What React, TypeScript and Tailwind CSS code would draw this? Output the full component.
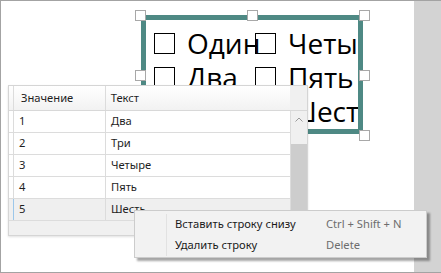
import { ReactNode } from "react";

const rows = [
  { value: "1", text: "Два" },
  { value: "2", text: "Три" },
  { value: "3", text: "Четыре" },
  { value: "4", text: "Пять" },
  { value: "5", text: "Шесть" },
];

const options = ["Один", "Два", "Три", "Четыре", "Пять", "Шесть"];

function Handle({ className }: { className: string }) {
  return <div className={`absolute w-[11px] h-[11px] bg-white border border-[#a8a8a8] ${className}`} />;
}

function CheckItem({ label }: { label: string }) {
  return (
    <div className="flex items-center h-[34px] whitespace-nowrap">
      <div className="w-[21px] h-[21px] border-[1.5px] border-black shrink-0" />
      <span className="ml-[12px] text-[28px] leading-none text-black">{label}</span>
    </div>
  );
}

function MenuItem({ label, hotkey }: { label: string; hotkey: string }) {
  return (
    <div className="flex items-center h-[21px]">
      <div className="w-[32px] h-full border-r border-[#e2e2e2]" />
      <span className="ml-[8px] w-[151px] text-[#1a1a1a]">{label}</span>
      <span className="text-[#6d6d6d]">{hotkey}</span>
    </div>
  );
}

function Cell({ children, className = "" }: { children?: ReactNode; className?: string }) {
  return <div className={`h-full flex items-center pl-[5px] border-r border-[#dcdcdc] ${className}`}>{children}</div>;
}

export default function App() {
  return (
    <div className="w-[441px] h-[273px] flex overflow-hidden border-t border-l border-b border-[#a3a3a3] bg-white font-['Noto_Sans',sans-serif]">
      <div className="relative flex-1 bg-white">
        {/* checkbox list on the design canvas */}
        <div className="absolute left-[140px] top-[14px] w-[222px] h-[119px] border-[5px] border-[#4e8984] bg-white overflow-hidden font-['Open_Sans',sans-serif]">
          <div className="grid grid-flow-col grid-rows-3 auto-cols-[101px] pl-[8px] pt-[6px]">
            {options.map((o) => (
              <CheckItem key={o} label={o} />
            ))}
          </div>
        </div>
        <Handle className="left-[134px] top-[9px]" />
        <Handle className="left-[246px] top-[9px]" />
        <Handle className="left-[358px] top-[9px]" />
        <Handle className="left-[134px] top-[69px]" />
        <Handle className="left-[358px] top-[69px]" />
        <Handle className="left-[358px] top-[129px]" />

        {/* data grid */}
        <div className="absolute left-[7px] top-[84px] w-[300px] h-[151px] border border-[#d5d5d5] bg-[#f0f0f0] shadow-[0_1px_2px_rgba(0,0,0,0.12)] flex flex-col text-[11.2px] text-[#1e1e1e]">
          <div className="flex h-[25px] bg-gradient-to-b from-[#ffffff] to-[#f2f2f2] border-b border-[#d8d8d8]">
            <div className="w-[5px] border-r border-[#dcdcdc]" />
            <Cell className="w-[92px] pl-[7px]">Значение</Cell>
            <Cell className="w-[185px] border-r-0">Текст</Cell>
            <div className="w-[17px] bg-[#f0f0f0]" />
          </div>
          <div className="flex flex-1">
            <div className="flex flex-col w-[282px]">
              {rows.map((r, i) => (
                <div
                  key={r.value}
                  className={`flex h-[22px] border-b border-[#dcdcdc] ${i === 4 ? "bg-[#efefef]" : "bg-white"}`}
                >
                  <div className={`w-[5px] border-r ${i === 4 ? "border-[#9cc7ea]" : "border-[#dcdcdc]"}`} />
                  <Cell className="w-[92px]">{r.value}</Cell>
                  <Cell className="w-[185px]">{r.text}</Cell>
                </div>
              ))}
            </div>
            <div className="w-[17px] h-[110px] flex flex-col bg-[#f0f0f0]">
              <div className="h-[17px] flex items-center justify-center">
                <svg width="8" height="5" viewBox="0 0 8 5">
                  <path d="M0.5 4.5 L4 1 L7.5 4.5" fill="none" stroke="#9a9a9a" strokeWidth="1" />
                </svg>
              </div>
              <div className="mt-[16px] flex-1 bg-[#cdcdcd]" />
            </div>
          </div>
        </div>

        {/* context menu */}
        <div className="absolute left-[133px] top-[209px] w-[293px] h-[48px] bg-[#f2f2f2] border border-[#cccccc] shadow-[3px_3px_2px_rgba(0,0,0,0.35)] py-[3px] text-[11.2px]">
          <MenuItem label="Вставить строку снизу" hotkey="Ctrl + Shift + N" />
          <MenuItem label="Удалить строку" hotkey="Delete" />
        </div>
      </div>
      <div className="w-[27px] h-full bg-[#d3d3d3]" />
    </div>
  );
}
